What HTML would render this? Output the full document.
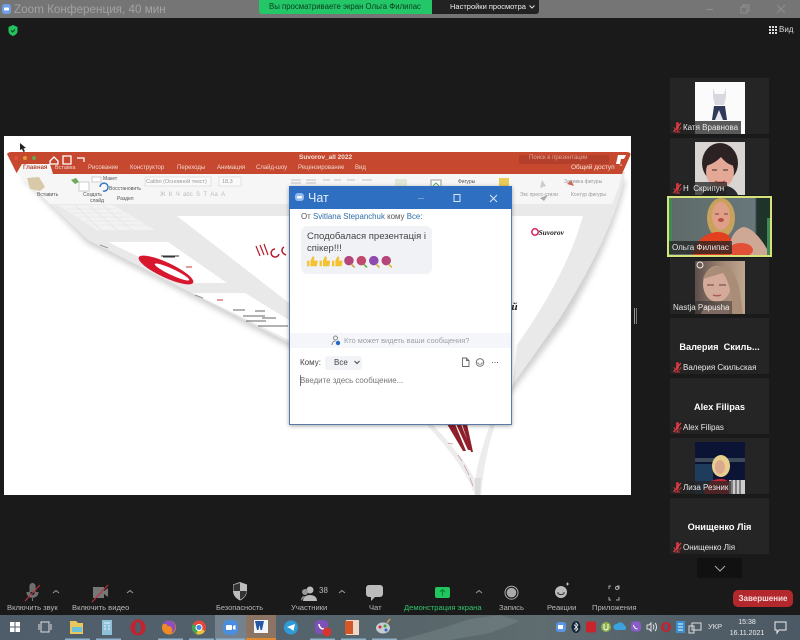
<!DOCTYPE html>
<html lang="ru"><head><meta charset="utf-8"><title>Zoom</title>
<style>
html,body{margin:0;padding:0;background:#1a1a1a}
#p{position:relative;width:800px;height:640px;overflow:hidden;background:#1a1a1a;font-family:"Liberation Sans","Noto Sans CJK SC",sans-serif;filter:blur(.35px)}
.a{position:absolute;white-space:nowrap}
svg{position:absolute;overflow:visible}
.tile{position:absolute;left:670px;width:99px;height:56px;background:#252525}
.nm{position:absolute;left:0;bottom:0;height:13px;line-height:13px;background:rgba(35,35,35,.75);color:#e8e8e8;font-size:8px;padding:0 3px 0 13px;white-space:nowrap}
.nm svg{left:2px;top:.5px}
.big{position:absolute;left:0;right:0;top:24px;text-align:center;color:#fff;font-weight:bold;font-size:9.200px;white-space:nowrap}
.lb{position:absolute;top:603px;font-size:7.600px;color:#b8b8b8;white-space:nowrap;line-height:9px}
</style></head><body><div id="p">

<!-- title bar -->
<div class="a" style="left:0;top:0;width:800px;height:18px;background:#757575"></div>
<svg style="left:0;top:0" width="14" height="18"><rect x="2" y="4" width="9" height="10" rx="3" fill="#6f9fe8"/><rect x="4" y="7.500" width="5" height="3" rx="1" fill="#fff"/></svg>
<div class="a" style="left:14px;top:1px;font-size:11.700px;line-height:17px;color:#a2a2a2">Zoom Конференция, 40 мин</div>
<div class="a" style="left:259px;top:0;width:173px;height:14px;background:#23c767;border-radius:0 0 0 3px;font-size:7.800px;line-height:14px;text-indent:10px;color:#0d3b1f">Вы просматриваете экран Ольга Филипас</div>
<div class="a" style="left:432px;top:0;width:107px;height:14px;background:#222;border-radius:0 0 3px 0;color:#eee;font-size:7.500px;line-height:14px;text-indent:18px">Настройки просмотра</div>
<svg style="left:529px;top:5px" width="6" height="4" fill="none" stroke="#ddd"><path d="M.5.500l2.500 2.500L5.500.500"/></svg>
<svg style="left:700px;top:0" width="95" height="18" fill="none" stroke="#8f8f8f"><path d="M6 9.500h7"/><path d="M41 7h6v6h-6zM43 7V5h6v6h-2"/><path d="M77 5l8 8M85 5l-8 8"/></svg>

<!-- security & view -->
<svg style="left:7px;top:24px" width="12" height="13"><path d="M6 1l4.500 2v4c0 2.500-2 4-4.500 5-2.500-1-4.500-2.500-4.500-5V3z" fill="#23c45f"/><path d="M4 6.500l1.500 1.500 2.500-2.500" stroke="#0e3a1e" fill="none"/></svg>
<svg style="left:769px;top:26px" width="8" height="8" fill="#ddd"><rect width="2" height="2"/><rect x="3" width="2" height="2"/><rect x="6" width="2" height="2"/><rect y="3" width="2" height="2"/><rect x="3" y="3" width="2" height="2"/><rect x="6" y="3" width="2" height="2"/><rect y="6" width="2" height="2"/><rect x="3" y="6" width="2" height="2"/><rect x="6" y="6" width="2" height="2"/></svg>
<div class="a" style="left:779px;top:25px;font-size:8px;line-height:10px;color:#ddd">Вид</div>

<!-- shared screen -->
<div class="a" style="left:4px;top:136px;width:627px;height:359px;background:#fff"></div>
<svg style="left:0;top:0" width="800" height="640">
 <defs><filter id="s" x="-10%" y="-10%" width="120%" height="120%"><feGaussianBlur stdDeviation="3"/></filter></defs>
 <!-- shadow -->
 <path d="M22 178L88 244 289 347 512 392 565 322C590 280 615 230 626 180z" fill="#aaa" opacity=".55" filter="url(#s)"/>
 <!-- grey surround -->
 <path d="M16 172H625C619 215 590 270 560 318L512 386H289V343L88 240z" fill="#e9e9e9"/>
 <!-- toolbar -->
 <path d="M17 174H622C620 185 616 195 612 204H50z" fill="#f6f6f6"/>
 <!-- funnel -->
 <path d="M427 425C447 447 466 470 475 495H481C483 470 488 445 495 425z" fill="#ececec"/>
 <path d="M433 425C452 445 468 465 475 480 478 460 484 442 490 425z" fill="#fff"/>
 <path d="M475 478h6l-1 17h-5z" fill="#dcdcdc"/>
 <path d="M447 424L463 451H466L455 424zM456 424L468 450H471L461 424zM462 424L471 452H473L467 424z" fill="#8e1f2b"/>
 <path d="M448 443l5 1M458 455l4 6M464 465l5 10M470 478l3 8" stroke="#c9959b" stroke-width=".7"/>
 <!-- slide -->
 <path d="M177 216H583C570 262 545 305 517 345L511 400H289V303z" fill="#fff"/>
 <!-- thumb 1 -->
 <path d="M58 205H113L155 230H97z" fill="#f2f2f2"/>
 <path d="M66 209h50M72 213h52M78 217h53M85 221h54M91 225h55M76 206l25 24M90 206l27 24M103 206l29 24" stroke="#e2e2e2" stroke-width=".6"/>
 <!-- thumb 2, 3 -->
 <path d="M108 242H168L227 283H193z" fill="#fff"/>
 <path d="M193 293H245L289 320V340z" fill="#fff"/>
 <ellipse cx="166" cy="270" rx="30" ry="7.500" transform="rotate(25 166 270)" fill="#d8172f"/>
 <ellipse cx="172" cy="272" rx="19" ry="3" transform="rotate(25 172 272)" fill="#fff"/>
 <path d="M161 256h18M163 257h12" stroke="#333" stroke-width="1"/>
 <path d="M233 310h12M255 311h10M243 316h22M262 318h14M246 321h20M258 326h30" stroke="#666" stroke-width="1"/>
 <path d="M217 300h6M186 267h6" stroke="#c33" stroke-width="1"/>
 <path d="M100 245l8 3M195 295l8 3" stroke="#999" stroke-width="1"/>
 <!-- red top -->
 <path d="M7 154Q8 152 12 152H626Q632 152 630 156L622 174H17z" fill="#c5482f"/>
 <path d="M16 174L22 164H50L53 174z" fill="#f6f6f6"/>
 <circle cx="16" cy="158" r="2" fill="#e34f3a"/><circle cx="25" cy="158" r="2" fill="#dd9a3c"/><circle cx="34" cy="158" r="2" fill="#6aa84f"/>
 <path d="M50 161l4-4 4 4v3h-8zM63 156h8v8h-8zM77 158h7v4" fill="none" stroke="#fff" stroke-width="1.300"/>
 <path d="M519 155h90v9h-90z" fill="#b4402b"/>
 <path d="M618 155h8l-2 4h-3l-1 5h-4z" fill="#fff"/>
 <!-- ribbon details -->
 <path d="M27 178l12-1 6 10-5 4-10-2z" fill="#d8c9a8"/>
 <path d="M71 180l5-2 3 4-4 2z" fill="#6aab5a"/>
 <path d="M79 182h10v9H79z" fill="#fff" stroke="#ccc"/>
 <path d="M92 177h9v5H92z" fill="#fff" stroke="#ccc"/>
 <path d="M100 187a4 4 0 1 1 3 4" fill="none" stroke="#3a79c4" stroke-width="1.500"/>
 <path d="M145 177h66v9h-66zM219 177h22v9h-22z" fill="#fafafa" stroke="#e2e2e2"/>
 <path d="M291 180h10M291 183h10M306 180h10M306 183h10M323 180h7M334 180h7M347 180h8M362 180h10" stroke="#ccc" stroke-width="1.200"/>
 <path d="M395 179h12v7h-12z" fill="#dfe8d6"/>
 <path d="M431 180h10v8h-10z" fill="#fff" stroke="#999"/><path d="M433 186l3-3 3 3" stroke="#6a6" fill="none"/>
 <path d="M499 178h10v10h-10z" fill="#e9cb58"/>
 <path d="M542 180l4 6-6 2z" fill="#ccc"/>
 <path d="M567 184l4-4 3 6z" fill="#d5644f"/>
 <path d="M540 198l8-3-4 6z" fill="#aaa"/>
 <!-- slide content -->
 <path d="M256 246l4 10M260 245l4 10M264 244l4 11" stroke="#b81c2e" stroke-width="1.200" fill="none"/>
 <path d="M275 249a4 4 0 1 0 4 5M284 247c-3 2-3 6 2 8" stroke="#b81c2e" stroke-width="1.500" fill="none"/>
 <circle cx="535" cy="232" r="3.200" fill="none" stroke="#d6235a" stroke-width="1.500"/>
</svg>
<div class="a" style="left:538.500px;top:226.500px;font:italic bold 7.500px/11px 'Liberation Serif',serif;color:#222">Suvorov</div>
<div class="a" style="left:511.500px;top:300px;font:italic bold 11px/14px 'Liberation Serif',serif;color:#222">й</div>
<div class="a" style="left:299px;top:153px;font-size:6.500px;line-height:9px;color:#f6e3dc;font-weight:bold">Suvorov_all 2022</div>
<div class="a" style="left:529px;top:154px;font-size:6px;line-height:9px;color:#e3a698">Поиск в презентации</div>
<div class="a" style="left:571px;top:163px;font-size:6.500px;line-height:9px;color:#f6e3dc">Общий доступ &nbsp;⌃</div>
<div class="a" style="left:23px;top:164px;font-size:6px;line-height:9px;color:#b44a36;font-weight:bold">Главная</div>
<div class="a" style="left:55px;top:164px;font-size:5.500px;line-height:9px;color:#f3d6cd">Вставка</div>
<div class="a" style="left:88px;top:164px;font-size:6px;line-height:9px;color:#f3d6cd">Рисование</div>
<div class="a" style="left:130px;top:164px;font-size:6px;line-height:9px;color:#f3d6cd">Конструктор</div>
<div class="a" style="left:177px;top:164px;font-size:6px;line-height:9px;color:#f3d6cd">Переходы</div>
<div class="a" style="left:217px;top:164px;font-size:6px;line-height:9px;color:#f3d6cd">Анимация</div>
<div class="a" style="left:256px;top:164px;font-size:6px;line-height:9px;color:#f3d6cd">Слайд-шоу</div>
<div class="a" style="left:298px;top:164px;font-size:6px;line-height:9px;color:#f3d6cd">Рецензирование</div>
<div class="a" style="left:355px;top:164px;font-size:6px;line-height:9px;color:#f3d6cd">Вид</div>
<div class="a" style="left:103px;top:175px;font-size:5px;line-height:8px;color:#555">Макет</div>
<div class="a" style="left:109px;top:185px;font-size:5px;line-height:8px;color:#555">Восстановить</div>
<div class="a" style="left:117px;top:195px;font-size:5px;line-height:8px;color:#555">Раздел</div>
<div class="a" style="left:37px;top:191px;font-size:5px;line-height:8px;color:#555">Вставить</div>
<div class="a" style="left:83px;top:191px;font-size:5px;line-height:8px;color:#555">Создать</div>
<div class="a" style="left:90px;top:197px;font-size:5px;line-height:8px;color:#555">слайд</div>
<div class="a" style="left:146px;top:178px;font-size:5.500px;line-height:8px;color:#999">Calibri (Основной текст)</div>
<div class="a" style="left:222px;top:178px;font-size:5.500px;line-height:8px;color:#999">18,3</div>
<div class="a" style="left:160px;top:191px;font-size:6px;line-height:8px;color:#bbb">Ж&nbsp;&nbsp;К&nbsp;&nbsp;Ч&nbsp;&nbsp;abc&nbsp;&nbsp;S&nbsp;&nbsp;Т&nbsp;&nbsp;Аа&nbsp;&nbsp;А</div>
<div class="a" style="left:458px;top:178px;font-size:5px;line-height:8px;color:#555">Фигуры</div>
<div class="a" style="left:564px;top:178px;font-size:5px;line-height:8px;color:#999">Заливка фигуры</div>
<div class="a" style="left:520px;top:191px;font-size:5px;line-height:8px;color:#999">Экс&nbsp;пресс-стили</div>
<div class="a" style="left:571px;top:191px;font-size:5px;line-height:8px;color:#999">Контур фигуры</div>
<svg style="left:19px;top:143px" width="8" height="10"><path d="M1 0l0 7 2-1 1.500 3 1.500-.800L4.500 5.500 7 5z" fill="#222"/></svg>
<div class="a" style="left:634px;top:308px;width:1px;height:16px;background:#999"></div>
<div class="a" style="left:636px;top:308px;width:1px;height:16px;background:#777"></div>

<!-- chat window -->
<div class="a" style="left:289px;top:186px;width:223px;height:239px;background:#fff;border:1px solid #5a7aa8;box-sizing:border-box;box-shadow:0 1px 4px rgba(0,0,0,.35)"></div>
<div class="a" style="left:289px;top:186px;width:223px;height:23px;background:#2f6fc1"></div>
<svg style="left:295px;top:193px" width="10" height="9"><rect width="9" height="8" rx="3" fill="#8fb9f2"/><rect x="2" y="3" width="5" height="2.500" rx="1" fill="#fff"/></svg>
<div class="a" style="left:308px;top:190px;font-size:12.500px;line-height:16px;color:#e4eefb">Чат</div>
<svg style="left:418px;top:192px" width="82" height="12" fill="none" stroke="#d8e6f8"><path d="M0 6.500h6" opacity=".4"/><rect x="36" y="2.500" width="6" height="7"/><path d="M72 3l7 7M79 3l-7 7"/></svg>
<div class="a" style="left:301px;top:211px;font-size:7.900px;line-height:11px;color:#555">От <span style="color:#2f6ea8">Svitlana Stepanchuk</span> кому <span style="color:#2f6ea8">Все</span>:</div>
<div class="a" style="left:301px;top:226px;width:131px;height:48px;background:#f1f2f6;border-radius:6px"></div>
<div class="a" style="left:307px;top:230.500px;font-size:9.500px;line-height:12.500px;color:#444">Сподобалася презентація і<br>спікер!!!</div>
<svg style="left:306px;top:255px" width="90" height="13">
 <g transform="scale(1.130)">
 <g fill="#f2c230"><path d="M1 5h2v5H1zM4 5l2-4 1.500 1-.5 3h3.500l-1 5H4z"/><path d="M12 5h2v5h-2zM15 5l2-4 1.500 1-.5 3h3.500l-1 5H15z"/><path d="M23 5h2v5h-2zM26 5l2-4 1.500 1-.5 3h3.500l-1 5H26z"/></g>
 <circle cx="38" cy="5" r="4.200" fill="#b5457a"/><path d="M40 8l3 3" stroke="#c9a24e" stroke-width="1.500"/><circle cx="49" cy="5" r="4.200" fill="#c2496e"/><path d="M51 8l3 3" stroke="#6fb04a" stroke-width="1.500"/><circle cx="60" cy="5" r="4.200" fill="#8f4ab0"/><path d="M62 8l3 3" stroke="#d9b340" stroke-width="1.500"/><circle cx="71" cy="5" r="4.200" fill="#b5457a"/><path d="M73 8l3 3" stroke="#dbb63c" stroke-width="1.500"/>
 </g>
</svg>
<div class="a" style="left:290px;top:333px;width:221px;height:15px;background:#f5f6fa"></div>
<svg style="left:331px;top:335px" width="10" height="11" fill="none"><circle cx="4.500" cy="3" r="2" stroke="#888"/><path d="M1 10c0-3 2-4 3.500-4" stroke="#888"/><circle cx="7" cy="8" r="2.200" fill="#2668c8"/></svg>
<div class="a" style="left:344px;top:335px;font-size:7.400px;line-height:11px;color:#9a9fa8">Кто может видеть ваши сообщения?</div>
<div class="a" style="left:300px;top:357px;font-size:8px;line-height:11px;color:#444">Кому:</div>
<div class="a" style="left:325px;top:356px;width:37px;height:14px;background:#f2f3f6;border-radius:3px"></div>
<div class="a" style="left:334px;top:357px;font-size:8px;line-height:11px;color:#444">Все</div>
<svg style="left:354px;top:360px" width="6" height="5" fill="none" stroke="#444"><path d="M.5 1l2.500 2.500L5.500 1"/></svg>
<svg style="left:461px;top:357px" width="40" height="11" fill="none" stroke="#666" stroke-width=".9"><path d="M1.500 1h4l2.500 2.500V9.500h-6.500zM5.500 1v2.500h2.500"/><circle cx="19" cy="5.500" r="3.800"/><path d="M17 5v1.500c1 1 3 1 4 0V5" stroke-width=".7"/><path d="M31 5.500h1M33.500 5.500h1M36 5.500h1"/></svg>
<div class="a" style="left:300px;top:375px;width:1px;height:11px;background:#777"></div>
<div class="a" style="left:300px;top:375px;font-size:7.900px;line-height:11px;color:#777">Введите здесь сообщение...</div>

<!-- participants -->
<div class="tile" style="top:78px">
 <div class="a" style="left:25px;top:4px;width:50px;height:52px;background:#fbfbfb"></div>
 <svg style="left:25px;top:4px" width="50" height="52"><path d="M18 6l2 6h9l2-6 0 9-2 8H20l-2-8z" fill="#d8d8e0"/><path d="M19 24h11l2 14H17z" fill="#2e3a58"/><path d="M24 28l4 10h-8z" fill="#e8e8ee"/></svg>
 <div class="nm"><svg width="10" height="11"><path d="M4 1.500a1.500 1.500 0 0 1 3 0v4a1.500 1.500 0 0 1-3 0z" fill="#c9343a"/><path d="M2 5c0 4 7 4 7 0M5.500 8v2M3 10h5" stroke="#c9343a" fill="none"/><path d="M1.500 10L9 1" stroke="#e0444a" stroke-width="1.200"/></svg>Катя Вравнова</div>
</div>
<div class="tile" style="top:138px;height:57px">
 <div class="a" style="left:25px;top:4px;width:50px;height:53px;background:#d8d5d2"></div>
 <svg style="left:25px;top:4px" width="50" height="53"><path d="M7 53c3-8 10-10 18-10s15 3 18 10z" fill="#2a2a30"/><ellipse cx="25" cy="21" rx="18" ry="20" fill="#2c2224"/><ellipse cx="25" cy="30" rx="14" ry="16" fill="#e4a896"/><path d="M10 24c6-1 12-5 16-9 4 5 8 8 14 9l-1-12-14-5-13 6z" fill="#2c2224"/><path d="M20 39c3 2 7 2 10 0" stroke="#b5524e" stroke-width="1.500" fill="none"/><path d="M17 28h5M28 28h5" stroke="#3a2a2a"/></svg>
 <div class="nm"><svg width="10" height="11"><path d="M4 1.500a1.500 1.500 0 0 1 3 0v4a1.500 1.500 0 0 1-3 0z" fill="#c9343a"/><path d="M2 5c0 4 7 4 7 0M5.500 8v2M3 10h5" stroke="#c9343a" fill="none"/><path d="M1.500 10L9 1" stroke="#e0444a" stroke-width="1.200"/></svg>Н&nbsp; Скрипун</div>
</div>
<div class="a" style="left:667px;top:196px;width:105px;height:61px;background:#5f6a66;border:2px solid #d8e27c;box-sizing:border-box;overflow:hidden">
 <svg style="left:0;top:0" width="101" height="57"><defs><linearGradient id="w" x1="0" x2="1"><stop offset="0" stop-color="#5d6a68"/><stop offset=".85" stop-color="#68777a"/><stop offset=".87" stop-color="#20332c"/><stop offset="1" stop-color="#1c3529"/></linearGradient></defs><rect width="101" height="57" fill="url(#w)"/><path d="M0 0h3v57H0zM98 20h3v37h-3z" fill="#3f8a50"/><ellipse cx="52" cy="20" rx="14" ry="20" fill="#c8a15d"/><ellipse cx="52" cy="18" rx="9" ry="14" fill="#e0a088"/><path d="M46 16h4M55 16h4" stroke="#6a4a3a"/><ellipse cx="52" cy="22" rx="3" ry="2" fill="#b4504a"/><path d="M24 57c2-14 12-22 24-23 12 0 16 6 18 23z" fill="#e2401f"/><path d="M62 57c-3-10 0-24 12-28 8 0 17 10 24 22v6z" fill="#cfa795"/><ellipse cx="72" cy="52" rx="12" ry="7" fill="#e25038"/></svg>
 <div class="nm" style="bottom:1px;left:0;padding:0 3px">Ольга Филипас</div>
</div>
<div class="tile" style="top:258px">
 <div class="a" style="left:25px;top:3px;width:50px;height:53px;background:#6b5b55"></div>
 <svg style="left:25px;top:3px" width="50" height="53"><defs><linearGradient id="h" x1="0" x2="1"><stop offset="0" stop-color="#5b4e4a"/><stop offset=".6" stop-color="#a58b78"/><stop offset="1" stop-color="#c0a78f"/></linearGradient></defs><rect width="50" height="53" fill="url(#h)"/><ellipse cx="22" cy="23" rx="14" ry="18" fill="#d4ab9a"/><path d="M8 18C12 3 32 0 40 15c6 12 6 28 8 38H36C38 35 34 20 28 12 22 14 14 16 8 18z" fill="#a98d76"/><path d="M12 24h7M24 24h7" stroke="#5c4038"/><path d="M18 34c2 1 6 1 8 0" stroke="#a95a5a" stroke-width="1.500"/><path d="M10 44c6 3 14 3 24 1v8H6z" fill="#c8a596"/></svg>
 <svg style="left:26px;top:2px" width="10" height="10"><circle cx="4" cy="5" r="3" fill="none" stroke="#eee" stroke-width="1"/></svg>
 <div class="nm" style="padding-left:3px;left:0;background:rgba(35,35,35,.45)">Nastja Papusha</div>
</div>
<div class="tile" style="top:318px">
 <div class="big">Валерия&nbsp; Скиль...</div>
 <div class="nm"><svg width="10" height="11"><path d="M4 1.500a1.500 1.500 0 0 1 3 0v4a1.500 1.500 0 0 1-3 0z" fill="#c9343a"/><path d="M2 5c0 4 7 4 7 0M5.500 8v2M3 10h5" stroke="#c9343a" fill="none"/><path d="M1.500 10L9 1" stroke="#e0444a" stroke-width="1.200"/></svg>Валерия Скильская</div>
</div>
<div class="tile" style="top:378px">
 <div class="big">Alex Filipas</div>
 <div class="nm"><svg width="10" height="11"><path d="M4 1.500a1.500 1.500 0 0 1 3 0v4a1.500 1.500 0 0 1-3 0z" fill="#c9343a"/><path d="M2 5c0 4 7 4 7 0M5.500 8v2M3 10h5" stroke="#c9343a" fill="none"/><path d="M1.500 10L9 1" stroke="#e0444a" stroke-width="1.200"/></svg>Alex Filipas</div>
</div>
<div class="tile" style="top:438px">
 <div class="a" style="left:25px;top:4px;width:50px;height:52px;background:#0c1436"></div>
 <svg style="left:25px;top:4px" width="50" height="52"><rect y="16" width="50" height="4" fill="#3c4a5a"/><rect y="22" width="18" height="30" fill="#1f3c5c"/><ellipse cx="26" cy="24" rx="9" ry="11" fill="#e8cf8c"/><ellipse cx="25" cy="25" rx="5" ry="7" fill="#dba98f"/><path d="M9 52c2-12 9-15 17-15 6 0 10 3 12 15z" fill="#c92431"/><path d="M34 38h16v14H34z" fill="#ccc"/><path d="M37 38v14M41 38v14M45 38v14" stroke="#333"/></svg>
 <div class="nm"><svg width="10" height="11"><path d="M4 1.500a1.500 1.500 0 0 1 3 0v4a1.500 1.500 0 0 1-3 0z" fill="#c9343a"/><path d="M2 5c0 4 7 4 7 0M5.500 8v2M3 10h5" stroke="#c9343a" fill="none"/><path d="M1.500 10L9 1" stroke="#e0444a" stroke-width="1.200"/></svg>Лиза Резник</div>
</div>
<div class="tile" style="top:498px">
 <div class="big">Онищенко Лія</div>
 <div class="nm"><svg width="10" height="11"><path d="M4 1.500a1.500 1.500 0 0 1 3 0v4a1.500 1.500 0 0 1-3 0z" fill="#c9343a"/><path d="M2 5c0 4 7 4 7 0M5.500 8v2M3 10h5" stroke="#c9343a" fill="none"/><path d="M1.500 10L9 1" stroke="#e0444a" stroke-width="1.200"/></svg>Онищенко Лія</div>
</div>
<div class="a" style="left:697px;top:558px;width:45px;height:20px;background:#111"></div>
<svg style="left:714px;top:565px" width="12" height="7" fill="none" stroke="#aaa"><path d="M1 1l5 5 5-5"/></svg>

<!-- toolbar -->
<svg style="left:0;top:580px" width="640" height="24" fill="none">
 <path d="M30 6a2.500 2.500 0 0 1 5 0v7a2.500 2.500 0 0 1-5 0zM27 12c0 7 11 7 11 0M32.500 18v3" fill="#6c6c6c" stroke="#777"/><path d="M25 21L40 5" stroke="#b8343c" stroke-width="1.200"/>
 <path d="M93 7h11v11H93zM104 11l4-3v9l-4-3z" fill="#777"/><path d="M92 22L108 5" stroke="#b8343c" stroke-width="1.200"/>
 <path d="M53 13l3-2.500 3 2.500M127 13l3-2.500 3 2.500M339 13l3-2.500 3 2.500M476 13l3-2.500 3 2.500" stroke="#999"/>
 <path d="M240 2l7 2.500v6c0 5-3 8-7 10-4-2-7-5-7-10v-6z" fill="#bdbdbd"/><path d="M240 3v8h6.500c0 4-3 7-6.500 8.500V11h-6.500V5z" fill="#333"/>
 <circle cx="310" cy="10" r="3.500" fill="#bbb"/><path d="M303 21c0-4 3-6 7-6s7 2 7 6z" fill="#bbb"/><circle cx="305" cy="12" r="3" fill="#999"/><path d="M301 21c0-3 1-5 4-5z" fill="#999"/>
 <path d="M369 5h11a3 3 0 0 1 3 3v6a3 3 0 0 1-3 3h-5l-4 4v-4h-2a3 3 0 0 1-3-3V8a3 3 0 0 1 3-3z" fill="#bcbcbc"/>
 <rect x="435" y="7" width="15" height="11" rx="2" fill="#22c55e"/><path d="M442.500 16V10M440 12l2.500-2.500L445 12" stroke="#083"/>
 <circle cx="511.500" cy="12.700" r="6.500" stroke="#aaa"/><circle cx="511.500" cy="12.700" r="4.800" fill="#aaa"/>
 <circle cx="561" cy="12" r="6" fill="#bbb"/><path d="M558 12v1.500c1.500 1.500 4.500 1.500 6 0V12" stroke="#333"/><path d="M566 4h3M567.500 2.500v3" stroke="#bbb"/>
 <path d="M609 9V6h2M617 6h2v3M619 17v3h-3M611 20h-2v-3" stroke="#aaa"/><circle cx="617" cy="8" r="1.500" stroke="#aaa"/>
</svg>
<div class="a" style="left:319px;top:585px;font-size:8px;line-height:11px;color:#b8b8b8">38</div>
<div class="lb" style="left:7px">Включить звук</div>
<div class="lb" style="left:72px">Включить видео</div>
<div class="lb" style="left:216px;font-size:7.400px">Безопасность</div>
<div class="lb" style="left:291px">Участники</div>
<div class="lb" style="left:369px">Чат</div>
<div class="lb" style="left:404px;color:#2fc46a">Демонстрация экрана</div>
<div class="lb" style="left:499px">Запись</div>
<div class="lb" style="left:547px">Реакции</div>
<div class="lb" style="left:592px">Приложения</div>
<div class="a" style="left:733px;top:590px;width:60px;height:17px;background:#b3282d;border-radius:5px;color:#f4dede;font-size:8px;font-weight:bold;line-height:17px;text-align:center">Завершение</div>

<!-- taskbar -->
<div class="a" style="left:0;top:615px;width:800px;height:25px;background:linear-gradient(90deg,#4f5d6b 0,#54626d 35%,#59676b 55%,#5f6c70 68%,#525f68 85%,#4c5a66 100%)"></div>
<svg style="left:400px;top:615px" width="130" height="25"><path d="M0 25L40 14 70 4 100 0 120 6 90 18 50 25z" fill="#7b8a8c" opacity=".45"/></svg>
<div class="a" style="left:215px;top:615px;width:31px;height:25px;background:#75828e"></div>
<div class="a" style="left:246px;top:615px;width:30px;height:25px;background:#8b7463"></div>
<svg style="left:0;top:615px" width="800" height="25">
 <g fill="#fff"><rect x="10" y="7" width="4.500" height="4.500"/><rect x="15.500" y="7" width="4.500" height="4.500"/><rect x="10" y="12.500" width="4.500" height="4.500"/><rect x="15.500" y="12.500" width="4.500" height="4.500"/></g>
 <g fill="none" stroke="#ddd"><rect x="41" y="7" width="8" height="10"/><path d="M39 9v6M51 9v6"/></g>
 <path d="M70 6h6l2 2h5v11H70z" fill="#e9c75d"/><rect x="72" y="12" width="10" height="5" fill="#6cc0d8"/>
 <rect x="102" y="5" width="10" height="15" fill="#8ec1d8"/><path d="M104 8h6M104 11h2M108 11h2M104 14h2M108 14h2" stroke="#eef"/>
 <ellipse cx="138" cy="12.500" rx="7.500" ry="8" fill="#c8202d"/><ellipse cx="138" cy="12.500" rx="3" ry="6" fill="#4f5d6b"/>
 <circle cx="169" cy="12.500" r="7" fill="#f08a24"/><path d="M163 9c2-4 8-5 11-1 3 4 1 9-3 10 2-2 2-6-2-7-2 0-3-1-2-2z" fill="#8a4fc0"/>
 <circle cx="199" cy="12.500" r="7" fill="#e4483a"/><path d="M199 12.500l6 3.500a7 7 0 0 1-9 3z" fill="#e7c23a"/><path d="M199 12.500l-3 6.500a7 7 0 0 1-3-10z" fill="#3fa552"/><circle cx="199" cy="12.500" r="3" fill="#4a89dc" stroke="#fff"/>
 <rect x="223" y="5" width="15" height="15" rx="5" fill="#4a8ee0"/><rect x="226" y="10" width="6" height="5" rx="1" fill="#fff"/><path d="M233 11l2.500-1v5l-2.500-1z" fill="#fff"/>
 <rect x="254" y="5" width="14" height="13" fill="#f2f4f8"/><path d="M255 6h9l-2 9h-1.500l-1-5-1 5H257z" fill="#2458a6"/><rect x="246" y="23" width="30" height="2" fill="#e08a30"/>
 <circle cx="291" cy="12.500" r="7" fill="#2f9bd6"/><path d="M287 12l8-3-1.500 7-2.500-2z" fill="#fff"/>
 <rect x="315" y="5" width="13" height="14" rx="4" fill="#7d51b8"/><path d="M319 9c0 3 2 5 5 5" stroke="#fff" fill="none" stroke-width="1.500"/><circle cx="327" cy="17" r="4.500" fill="#d5342f"/>
 <rect x="346" y="5" width="13" height="15" fill="#f0d8c8"/><rect x="345" y="6" width="8" height="13" fill="#d2582a"/>
 <ellipse cx="383" cy="13" rx="7" ry="5.500" fill="#c7ccd2"/><circle cx="380" cy="12" r="1.500" fill="#c33"/><circle cx="385" cy="11" r="1.500" fill="#3a3"/><circle cx="386" cy="15" r="1.500" fill="#36c"/><path d="M387 8l3-4" stroke="#c9a24e" stroke-width="1.500"/>
 <g fill="#8fb2cc"><rect x="65" y="23.500" width="25" height="1.500"/><rect x="96" y="23.500" width="25" height="1.500"/><rect x="158" y="23.500" width="25" height="1.500"/><rect x="189" y="23.500" width="25" height="1.500"/><rect x="216" y="23.500" width="29" height="1.500"/><rect x="310" y="23.500" width="25" height="1.500"/><rect x="341" y="23.500" width="25" height="1.500"/><rect x="372" y="23.500" width="25" height="1.500"/></g>
 <!-- tray -->
 <rect x="556" y="7" width="10" height="10" rx="3" fill="#5a95e6"/><rect x="558" y="10" width="5" height="4" fill="#fff"/>
 <ellipse cx="576" cy="12" rx="4.500" ry="6" fill="#14243a"/><path d="M574 9.500l4 4.500-2 2V8l2 2-4 4.500" stroke="#fff" fill="none" stroke-width=".7"/>
 <rect x="586" y="6.500" width="10" height="11" rx="2" fill="#c8242c"/>
 <circle cx="606" cy="12" r="5" fill="#8cb04a"/><path d="M604 9v4a2 2 0 0 0 4 0V9" stroke="#fff" fill="none"/>
 <path d="M616 15a3 3 0 0 1 1-6 4 4 0 0 1 7 1 3 3 0 0 1 1 5z" fill="#3aa3e0"/>
 <rect x="631" y="6.500" width="10" height="10" rx="3" fill="#8a5cc8"/><path d="M633.500 10c0 2 2 4 4 4" stroke="#fff" fill="none"/>
 <path d="M647 10h2l2-2v8l-2-2h-2zM653 9.500c1 1 1 4 0 5M655 8c2 2 2 6 0 8" stroke="#ddd" fill="none"/>
 <circle cx="666" cy="12" r="5" fill="#c8202d"/><ellipse cx="666" cy="12" rx="2" ry="3.500" fill="#4f5d6b"/>
 <rect x="676" y="6" width="9" height="12" fill="#3f8fd0"/><path d="M678 9h5M678 12h5M678 15h5" stroke="#dff"/>
 <path d="M692 8h9v7h-9zM689 11h5v7h-5z" stroke="#ddd" fill="none"/>
 <path d="M775 7h11v8h-7l-2 3v-3h-2z" stroke="#eee" fill="none"/>
</svg>
<div class="a" style="left:708px;top:621px;font-size:7.500px;line-height:11px;color:#e6e6e6">УКР</div>
<div class="a" style="left:727px;top:617px;width:40px;text-align:center;font-size:7px;line-height:11px;color:#eee">15:38<br>16.11.2021</div>
</div></body></html>
